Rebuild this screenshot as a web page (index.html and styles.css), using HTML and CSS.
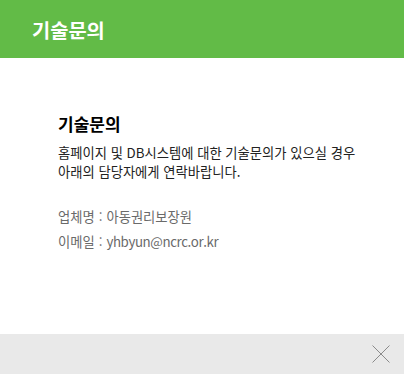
FILE: index.html
```html
<!DOCTYPE html>
<html lang="ko">
<head>
    <meta charset="UTF-8">
    <title>기술문의</title>
    <link rel="stylesheet" href="styles.css">
</head>
<body>
    <div class="popup">
        <div class="popup-head">기술문의</div>
        <div class="popup-body">
            <h2>기술문의</h2>
            <p class="desc">홈페이지 및 DB시스템에 대한 기술문의가 있으실 경우<br>아래의 담당자에게 연락바랍니다.</p>
            <ul class="info">
                <li>업체명<span class="sep">:</span>아동권리보장원</li>
                <li>이메일<span class="sep">:</span><span class="mail">yhbyun@ncrc.or.kr</span></li>
            </ul>
        </div>
        <div class="popup-foot">
            <svg class="close" width="18" height="18" viewBox="0 0 18 18">
                <path d="M0.5 0.5 L17.5 17.5 M17.5 0.5 L0.5 17.5" stroke="#8a8a8a" stroke-width="1" fill="none"/>
            </svg>
        </div>
    </div>
</body>
</html>
```

FILE: styles.css
```css
body {
    margin: 0;
    font-family: "Noto Sans CJK KR", "Noto Sans", sans-serif;
    background: #fff;
}

.popup {
    width: 404px;
    height: 374px;
    display: flex;
    flex-direction: column;
}

.popup-head {
    height: 58px;
    background-color: #62bb47;
    color: #fff;
    font-size: 19.8px;
    font-weight: bold;
    padding-left: 32px;
    display: flex;
    align-items: center;
}

.popup-body {
    flex: 1;
    padding: 55px 0 0 58px;
}

.popup-body h2 {
    margin: 0 0 8px;
    font-size: 17px;
    font-weight: bold;
    color: #000;
    line-height: 22px;
}

.desc {
    margin: 0;
    font-size: 13.3px;
    line-height: 19px;
    color: #222;
}

.info {
    list-style: none;
    margin: 23px 0 0;
    padding: 0;
    font-size: 13.3px;
    line-height: 25px;
    color: #6a6a6a;
}

.sep {
    margin: 0 4px;
}

.mail {
    letter-spacing: -0.4px;
}

.popup-foot {
    height: 40px;
    background-color: #e9e9e9;
    display: flex;
    justify-content: flex-end;
    align-items: center;
    padding-right: 14px;
}
```
